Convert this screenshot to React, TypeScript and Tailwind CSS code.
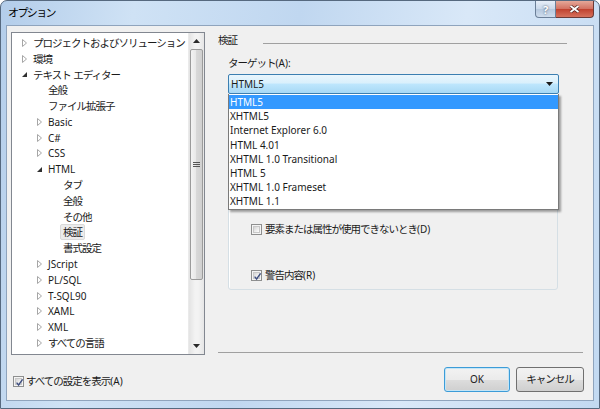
import React from 'react';

type Node = { label: string; level: number; arrow?: 'c' | 'e'; selected?: boolean };

const tree: Node[] = [
  { label: 'プロジェクトおよびソリューション', level: 0, arrow: 'c' },
  { label: '環境', level: 0, arrow: 'c' },
  { label: 'テキスト エディター', level: 0, arrow: 'e' },
  { label: '全般', level: 1 },
  { label: 'ファイル拡張子', level: 1 },
  { label: 'Basic', level: 1, arrow: 'c' },
  { label: 'C#', level: 1, arrow: 'c' },
  { label: 'CSS', level: 1, arrow: 'c' },
  { label: 'HTML', level: 1, arrow: 'e' },
  { label: 'タブ', level: 2 },
  { label: '全般', level: 2 },
  { label: 'その他', level: 2 },
  { label: '検証', level: 2, selected: true },
  { label: '書式設定', level: 2 },
  { label: 'JScript', level: 1, arrow: 'c' },
  { label: 'PL/SQL', level: 1, arrow: 'c' },
  { label: 'T-SQL90', level: 1, arrow: 'c' },
  { label: 'XAML', level: 1, arrow: 'c' },
  { label: 'XML', level: 1, arrow: 'c' },
  { label: 'すべての言語', level: 1, arrow: 'c' },
];

const options = [
  'HTML5',
  'XHTML5',
  'Internet Explorer 6.0',
  'HTML 4.01',
  'XHTML 1.0 Transitional',
  'HTML 5',
  'XHTML 1.0 Frameset',
  'XHTML 1.1',
];

function T({ s }: { s: string }) {
  const parts = s.match(/[\u0000-\u007f]+|[^\u0000-\u007f]+/g) || [];
  return (
    <>
      {parts.map((p, i) =>
        /^[\u0000-\u007f]+$/.test(p) ? (
          <span key={i}>{p}</span>
        ) : (
          <span key={i} className="text-[10.5px] tracking-[-1px]">
            {p}
          </span>
        )
      )}
    </>
  );
}

function Arrow({ kind }: { kind?: 'c' | 'e' }) {
  if (kind === 'c')
    return (
      <svg width="5" height="8" viewBox="0 0 5 8" className="block">
        <polygon points="0.5,0.5 4.5,4 0.5,7.5" fill="#ffffff" stroke="#a6a6a6" strokeWidth="1" />
      </svg>
    );
  if (kind === 'e')
    return (
      <svg width="5" height="5" viewBox="0 0 5 5" className="block">
        <polygon points="5,0 5,5 0,5" fill="#303030" />
      </svg>
    );
  return null;
}

function CheckBox({ checked }: { checked?: boolean }) {
  return (
    <span className="w-[11px] h-[11px] shrink-0 border border-[#8e8f8f] bg-[#f4f4f4] flex items-center justify-center">
      <span className="w-[7px] h-[7px] border border-[#c8c8c8] bg-[linear-gradient(135deg,#d4d4d4,#ffffff)] flex items-center justify-center relative">
        {checked && (
          <svg width="9" height="9" viewBox="0 0 9 9" className="block absolute -left-[1px] -top-[1px]">
            <path d="M1.6 4.6 L3.6 7 L7.6 1.4" fill="none" stroke="#3f4f80" strokeWidth="1.4" />
          </svg>
        )}
      </span>
    </span>
  );
}

function ScrollBar() {
  return (
    <div className="w-[16px] h-full flex flex-col bg-[linear-gradient(90deg,#e3e3e3,#f3f3f3_40%,#f3f3f3_60%,#e6e6e6)] border-l border-[#eaeaea]">
      <div className="h-[16px] flex items-center justify-center">
        <svg width="7" height="4" viewBox="0 0 7 4" className="block">
          <polygon points="0,4 3.5,0 7,4" fill="#2a2a2a" />
        </svg>
      </div>
      <div className="mx-[1px] h-[231px] rounded-[2px] border border-[#9b9b9b] bg-[linear-gradient(90deg,#f3f3f3,#e8e8e8_45%,#d8d8d8_50%,#d0d0d0)] flex items-center justify-center">
        <div className="flex flex-col gap-[1px]">
          <div className="w-[7px] h-[1px] bg-[#555]" />
          <div className="w-[7px] h-[1px] bg-[#555]" />
          <div className="w-[7px] h-[1px] bg-[#555]" />
        </div>
      </div>
      <div className="flex-1" />
      <div className="h-[16px] flex items-center justify-center">
        <svg width="7" height="4" viewBox="0 0 7 4" className="block">
          <polygon points="0,0 7,0 3.5,4" fill="#2a2a2a" />
        </svg>
      </div>
    </div>
  );
}

const btn =
  'h-[25px] rounded-[3px] flex items-center justify-center bg-[linear-gradient(180deg,#f2f2f2,#ebebeb_50%,#dddddd_51%,#cfcfcf)]';

export default function App() {
  return (
    <div className="w-[600px] h-[409px] overflow-hidden font-['Noto_Sans','Noto_Sans_CJK_JP',sans-serif] text-[10px] text-[#1a1a1a]">
      <div className="w-[600px] h-[409px] flex flex-col rounded-t-[7px] border border-[#56697f] bg-[linear-gradient(100deg,#b3cdea_0%,#cfe2f5_20%,#c0d7f0_45%,#d9e8f8_70%,#c2d9f1_100%)]">
        {/* title bar */}
        <div className="h-[24px] flex items-start">
          <div className="pl-[7px] pt-[4px] text-[11px] tracking-[-1.6px] leading-[16px] text-black">オプション</div>
          <div className="ml-auto mr-[5px] flex">
            <div className="w-[21px] h-[17px] rounded-bl-[4px] border border-[#6b7f98] border-t-0 bg-[linear-gradient(180deg,#e6eef8,#c9d8ea_50%,#b5c8de_51%,#cfdded)] flex items-center justify-center">
              <span className="text-[11px] leading-[11px] font-bold text-white [text-shadow:0_0_2px_#2d3d55]">?</span>
            </div>
            <div className="w-[38px] h-[17px] rounded-br-[4px] border border-[#6b3a36] border-t-0 border-l-0 bg-[linear-gradient(180deg,#e5a899,#d27060_50%,#c0412e_51%,#d6715c)] flex items-center justify-center">
              <svg width="11" height="8" viewBox="0 0 11 8" className="block">
                <path d="M1.5 1 L9.5 7 M9.5 1 L1.5 7" stroke="#4a1f1a" strokeWidth="3.2" />
                <path d="M1.5 1 L9.5 7 M9.5 1 L1.5 7" stroke="#ffffff" strokeWidth="1.9" />
              </svg>
            </div>
          </div>
        </div>
        {/* client */}
        <div className="mx-[5px] h-[376px] border border-[#8fa4bd] bg-[#f0f0f0] flex flex-col">
          <div className="flex pt-[6px] pl-[4px]">
            {/* tree */}
            <div className="w-[194px] h-[323px] border border-[#828790] bg-white flex overflow-hidden">
              <div className="flex-1 pt-[2px] overflow-hidden">
                {tree.map((n, i) => (
                  <div key={i} className="h-[15.8px] flex items-center" style={{ paddingLeft: 10 + n.level * 15 }}>
                    <div className="w-[11px] shrink-0 flex items-center">
                      <Arrow kind={n.arrow} />
                    </div>
                    <span
                      className={
                        n.selected
                          ? 'px-[2px] -ml-[3px] h-[16px] leading-[15px] rounded-[2px] border border-[#dadada] bg-[#ececec] whitespace-nowrap'
                          : 'whitespace-nowrap leading-[16px]'
                      }
                    >
                      <T s={n.label} />
                    </span>
                  </div>
                ))}
              </div>
              <ScrollBar />
            </div>
            {/* right panel */}
            <div className="relative ml-[13px] w-[366px] h-[323px] flex flex-col">
              <div className="h-[16px] flex items-center">
                <span className="leading-[16px]">
                  <T s="検証" />
                </span>
                <div className="ml-[26px] mt-[6px] w-[304px] h-[1px] bg-[#a0a0a0]" />
              </div>
              <div className="pl-[10px] mt-[7px] leading-[16px]">
                <T s="ターゲット(A):" />
              </div>
              <div className="ml-[10px] mt-[3px] w-[331px] h-[20px] rounded-[2px] border border-[#3c7fb1] bg-[linear-gradient(180deg,#eaf6fd_0%,#d9f0fc_45%,#bee6fd_50%,#a7d9f5_100%)] flex items-center pl-[2px] pr-[5px]">
                <span className="leading-[16px]">HTML5</span>
                <svg width="7" height="4" viewBox="0 0 7 4" className="block ml-auto">
                  <polygon points="0,0 7,0 3.5,4" fill="#1a1a1a" />
                </svg>
              </div>
              <div className="ml-[10px] mt-[6px] w-[330px] h-[190px] rounded-[3px] border border-[#d5dfe5] shadow-[inset_1px_1px_0_#ffffff] flex flex-col">
                <div className="mt-[120px] ml-[22px] flex items-center">
                  <CheckBox />
                  <span className="ml-[3px] leading-[16px]">
                    <T s="要素または属性が使用できないとき(D)" />
                  </span>
                </div>
                <div className="mt-[30px] ml-[22px] flex items-center">
                  <CheckBox checked />
                  <span className="ml-[3px] leading-[16px]">
                    <T s="警告内容(R)" />
                  </span>
                </div>
              </div>
              <div className="mt-auto mb-[2px] w-[365px] h-[1px] bg-[#a0a0a0]" />
              {/* dropdown popup */}
              <div className="absolute left-[10px] top-[62px] w-[331px] h-[116px] bg-white border border-[#7a7a7a] border-t-0 shadow-[2px_2px_2px_rgba(0,0,0,0.35)] pt-[1px]">
                {options.map((o, i) => (
                  <div
                    key={i}
                    className={
                      'h-[14.2px] leading-[14px] pl-[1px] whitespace-nowrap ' +
                      (i === 0 ? 'bg-[#3399ff] text-white' : '')
                    }
                  >
                    {o}
                  </div>
                ))}
              </div>
            </div>
          </div>
          {/* bottom row */}
          <div className="flex-1 flex items-start">
            <div className="mt-[18px] ml-[6px] flex items-center">
              <CheckBox checked />
              <span className="ml-[2px] leading-[16px]">
                <T s="すべての設定を表示(A)" />
              </span>
            </div>
            <div className="ml-auto mr-[9px] mt-[12px] flex gap-[6px]">
              <div className={btn + ' w-[66px] border border-[#3c9cd8] shadow-[inset_0_0_0_1px_#c4e5f6]'}>OK</div>
              <div className={btn + ' w-[68px] border border-[#707070]'}>
                <T s="キャンセル" />
              </div>
            </div>
          </div>
        </div>
      </div>
    </div>
  );
}
